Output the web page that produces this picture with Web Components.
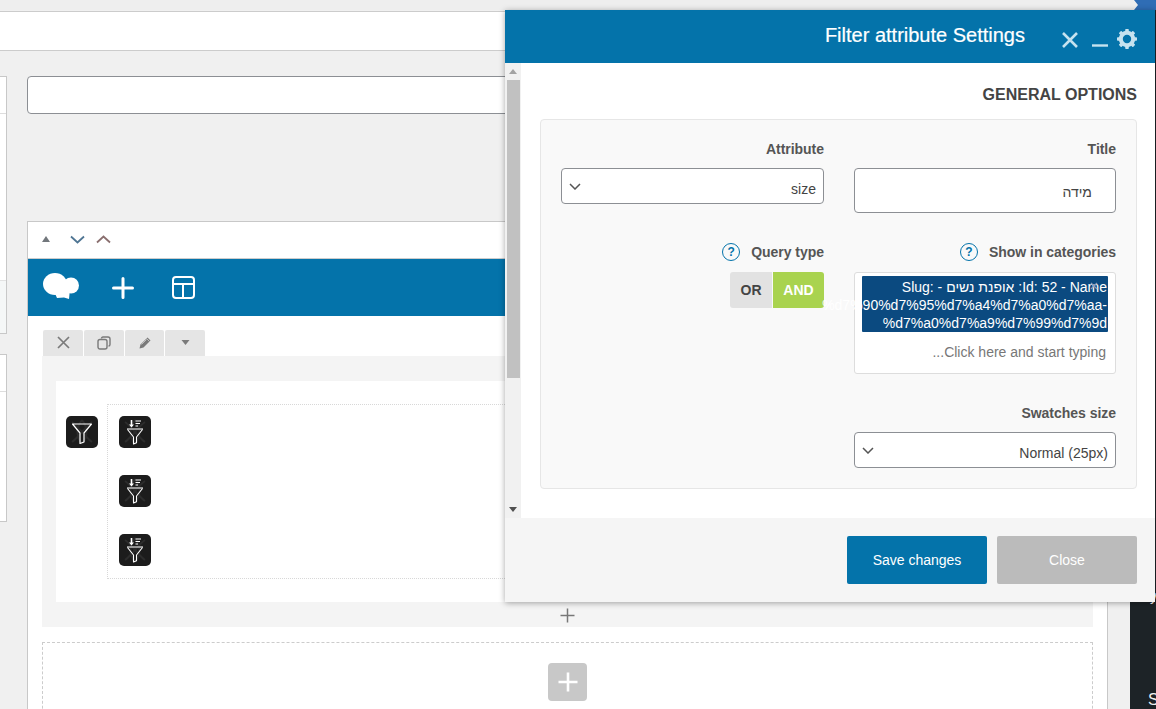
<!DOCTYPE html>
<html lang="en">
<head>
<meta charset="utf-8">
<title>Filter attribute Settings</title>
<style>
html,body{margin:0;padding:0;height:709px;overflow:hidden;background:#f0f0f0;font-family:"Liberation Sans",Arial,sans-serif;}
</style>
</head>
<body>
<x-page></x-page>
<script>
const def=(name,html)=>{customElements.define(name,class extends HTMLElement{constructor(){super();this.attachShadow({mode:'open'}).innerHTML=html;}});};

const funnelBg=`<path d="M6 6C12 10 20 22 26 26M26 6C20 10 12 22 6 26M16 4C10 12 10 20 16 28M16 4C22 12 22 20 16 28" fill="none" stroke="#2c2c2c" stroke-width="2"/>`;

def('x-funnel',`<style>:host{display:block;width:32px;height:32px;border-radius:5px;background:#1c1c1c;overflow:hidden}svg{display:block}</style>
<svg width="32" height="32" viewBox="0 0 32 32">${funnelBg}
<path d="M6.5 8H25.5L18 17V26L14 27.5V17Z" fill="none" stroke="#fff" stroke-width="1.2" stroke-linejoin="round"/></svg>`);

def('x-funnel-sort',`<style>:host{display:block;width:32px;height:32px;border-radius:5px;background:#1c1c1c;overflow:hidden}svg{display:block}</style>
<svg width="32" height="32" viewBox="0 0 32 32">${funnelBg}
<path d="M12.5 4V10" stroke="#fff" stroke-width="1.6"/><path d="M10 8.5H15L12.5 11.5Z" fill="#fff"/>
<path d="M16.5 5H22M16.5 7.5H21M16.5 10H19" stroke="#fff" stroke-width="1.2"/>
<path d="M8 13H24" stroke="#bbb" stroke-width="1.4"/>
<path d="M8.5 13.5L14.5 21V28L17.5 26.8V21L23.5 13.5" fill="none" stroke="#fff" stroke-width="1.1" stroke-linejoin="round"/></svg>`);

def('x-sidebar',`<style>
:host{display:flex;flex-direction:column;gap:20px;width:7px;flex:none}
.box{box-sizing:border-box;background:#fff;border:1px solid #c8c8c8;border-left:0;display:flex;flex-direction:column}
.a{height:258px}.b{height:168px}
.hd{height:36px;border-bottom:1px solid #ddd;flex:none}
.sp{flex:1}
.ft{height:52px;background:#f5f7f7;border-top:1px solid #e2e2e2;flex:none}
</style>
<div class="box a"><div class="hd"></div><div class="sp"></div><div class="ft"></div></div>
<div class="box b"><div class="hd"></div></div>`);

def('x-card-head',`<style>
:host{display:flex;align-items:center;height:36px;background:#fff;border-bottom:1px solid #ccc;padding-left:14px}
svg{display:block;flex:none;margin-top:-2px}
</style>
<svg style="margin-left:-1px" width="10" height="6" viewBox="0 0 10 6"><path d="M5 0L9 6H1Z" fill="#72777c"/></svg>
<svg style="margin-left:19px" width="15" height="9" viewBox="0 0 15 9"><path d="M1 1.500L7.500 7.500L14 1.500" fill="none" stroke="#4f7593" stroke-width="1.800"/></svg>
<svg style="margin-left:11px" width="15" height="9" viewBox="0 0 15 9"><path d="M1 7.500L7.500 1.500L14 7.500" fill="none" stroke="#8a6f6f" stroke-width="1.800"/></svg>`);

def('x-toolbar',`<style>
:host{display:flex;align-items:center;height:57px;background:#0473aa;padding-left:15px}
svg{display:block;flex:none}
</style>
<svg width="36" height="26" viewBox="0 0 36 26" style="margin-top:-4px"><ellipse cx="12" cy="11" rx="12" ry="11" fill="#fff"/><circle cx="28" cy="12.500" r="8" fill="#fff"/><path d="M10 16H27L26 26L21 24.500L14 25Z" fill="#fff"/></svg>
<svg style="margin-left:33px" width="22" height="22" viewBox="0 0 22 22"><path d="M11 1.500V20.500M1.500 11H20.500" stroke="#fff" stroke-width="3" stroke-linecap="round"/></svg>
<svg style="margin-left:38px" width="23" height="23" viewBox="0 0 23 23"><rect x="1" y="1" width="21" height="21" rx="3" fill="none" stroke="#fff" stroke-width="2"/><path d="M1 8H22M11 8V22" stroke="#fff" stroke-width="2"/></svg>`);

def('x-tabs',`<style>
:host{display:flex;gap:1px;height:26px;margin-left:1px}
div{width:40px;height:26px;background:#e5e5e5;border-radius:2px 2px 0 0;display:flex;align-items:center;justify-content:center}
svg{display:block;margin-top:-1px}
</style>
<div><svg width="13" height="13" viewBox="0 0 13 13"><path d="M1 1L12 12M12 1L1 12" stroke="#7a7a7a" stroke-width="1.700"/></svg></div>
<div><svg width="14" height="14" viewBox="0 0 14 14"><rect x="1" y="3.500" width="9" height="9.500" rx="2" fill="none" stroke="#7a7a7a" stroke-width="1.400"/><path d="M4.500 2.500Q4.500 1 6 1H11Q13 1 13 3V8.500Q13 10 11.500 10" fill="none" stroke="#7a7a7a" stroke-width="1.400"/></svg></div>
<div style="width:39px"><svg width="14" height="14" viewBox="0 0 14 14"><path d="M1.500 12.500L2.500 8.500L9.500 1.500L12.500 4.500L5.500 11.500Z" fill="#7a7a7a"/><path d="M8.500 2.500L11.500 5.500M3.500 8.500L8.500 3.500" stroke="#cfcfcf" stroke-width=".8"/></svg></div>
<div><svg width="9" height="5" viewBox="0 0 9 5"><path d="M0.500 0H8.500L4.500 5Z" fill="#7a7a7a"/></svg></div>`);

def('x-row',`<style>
:host{display:block;background:#f4f4f4;padding:25px 14px 0}
.inner{background:#fff;height:221px;box-sizing:border-box;padding:23px 14px 0 10px;display:flex;gap:9px}
.dots{flex:1;box-sizing:border-box;height:175px;border:1px dotted #d8d8d8;padding:11px 11px;display:flex;flex-direction:column;gap:27px}
.first{margin-top:12px}
.add{height:25px;box-sizing:border-box;padding-top:1px;display:flex;align-items:center;justify-content:center}
svg{display:block}
</style>
<div class="inner"><x-funnel class="first"></x-funnel>
<div class="dots"><x-funnel-sort></x-funnel-sort><x-funnel-sort></x-funnel-sort><x-funnel-sort></x-funnel-sort></div></div>
<div class="add"><svg width="15" height="15" viewBox="0 0 15 15"><path d="M7.500 0.500V14.500M0.500 7.500H14.500" stroke="#777" stroke-width="1.500"/></svg></div>`);

def('x-dropzone',`<style>
:host{display:flex;justify-content:center;border:1px dashed #ccc;border-bottom:0;height:80px;padding-top:20px;margin-top:15px}
div{width:39px;height:38px;border-radius:4px;background:#c8c8c8;display:flex;align-items:center;justify-content:center}
svg{display:block}
</style><div><svg width="20" height="20" viewBox="0 0 20 20"><path d="M10 0.500V19.500M0.500 10H19.500" stroke="#fff" stroke-width="2.600"/></svg></div>`);

def('x-card',`<style>
:host{display:block;background:#fff;border:1px solid #c8c8c8;border-bottom:0}
.content{padding:14px 14px 0}
</style>
<x-card-head></x-card-head><x-toolbar></x-toolbar>
<div class="content"><x-tabs></x-tabs><x-row></x-row><x-dropzone></x-dropzone></div>`);

def('x-main',`<style>
:host{display:block;width:1081px;flex:none}
.input{box-sizing:border-box;height:38px;background:#fff;border:1px solid #8c8f94;border-radius:4px;margin-bottom:107px}
</style><div class="input"></div><x-card></x-card>`);

def('x-help',`<style>
:host{display:inline-flex;box-sizing:border-box;width:18px;height:18px;border:1.500px solid #0473aa;border-radius:50%;align-items:center;justify-content:center;color:#0473aa;font:bold 12px "Liberation Sans",sans-serif;letter-spacing:0;direction:ltr}
</style>?`);

def('x-label',`<style>
:host{display:flex;align-items:center;gap:11px;height:18px;font:bold 14px/20px "Liberation Sans",sans-serif;color:#555;letter-spacing:-.03px}
</style><slot></slot>`);

def('x-select',`<style>
:host{display:flex;box-sizing:border-box;direction:ltr;align-items:center;justify-content:space-between;height:36px;background:#fff;border:1px solid #8c8f94;border-radius:4px;padding:0 7px 0 7px;font:14px "Liberation Sans",sans-serif;color:#444}
span{padding-top:5px}
svg{display:block}
</style><svg width="12" height="7" viewBox="0 0 12 7"><path d="M1 1L6 6L11 1" fill="none" stroke="#555" stroke-width="1.500"/></svg><span><slot></slot></span>`);

def('x-text-input',`<style>
:host{display:flex;box-sizing:border-box;align-items:center;height:45px;background:#fff;border:1px solid #8c8f94;border-radius:4px;padding:2px 23px 0;direction:rtl;font:14px "Liberation Sans","Noto Sans",sans-serif;color:#444}
</style><slot></slot>`);

def('x-toggle',`<style>
:host{display:flex;direction:ltr;width:94px;height:36px;font:bold 14px "Liberation Sans",sans-serif;border-radius:3px;overflow:hidden;gap:1px}
div{display:flex;align-items:center;justify-content:center}
.or{width:42px;background:#e2e2e2;color:#444}
.and{flex:1;background:#a9d34f;color:#fff}
</style><div class="or">OR</div><div class="and">AND</div>`);

def('x-multi',`<style>
:host{display:block;box-sizing:border-box;height:102px;background:#fff;border:1px solid #ddd;border-radius:3px;padding:3px 7px 0;font:14px/18px "Liberation Sans","Noto Sans",sans-serif;color:#fff}
.tag{position:relative;height:56px;box-sizing:border-box;padding:2px 1px 0;background:#0b4a80;border-radius:1px}
.l{display:flex;justify-content:flex-end;white-space:nowrap;direction:ltr}
.l1{direction:rtl;justify-content:flex-start}
.x{position:absolute;right:10px;top:6px;display:block}
.ph{direction:rtl;color:#777;padding:11px 2px 0 0}
</style>
<div class="tag"><div class="l l1">Id: 52 - Name: אופנת נשים - Slug:&lrm;</div>
<div class="l">%d7%90%d7%95%d7%a4%d7%a0%d7%aa-</div>
<div class="l">%d7%a0%d7%a9%d7%99%d7%9d</div><svg class="x" width="8" height="8" viewBox="0 0 8 8"><path d="M1 1L7 7M7 1L1 7" stroke="#8f9dba" stroke-width="1.300"/></svg></div>
<div class="ph">Click here and start typing...</div>`);

def('x-field',`<style>
:host{display:flex;flex-direction:column;gap:var(--g,10px);align-items:stretch}
</style><slot></slot>`);

def('x-panel',`<style>
:host{display:grid;direction:rtl;grid-template-columns:262px 263px;column-gap:30px;align-content:start;box-sizing:border-box;height:370px;background:#f9f9f9;border:1px solid #e6e6e6;border-radius:4px;padding:20px 20px 0;font:14px "Liberation Sans",sans-serif}
.r2{margin-top:30px}
.r3{margin-top:30px;grid-column:1}
</style>
<x-field><x-label>Title</x-label><x-text-input>מידה</x-text-input></x-field>
<x-field><x-label>Attribute</x-label><x-select>size</x-select></x-field>
<x-field class="r2" style="--g:11px"><x-label><span>Show in categories</span><x-help></x-help></x-label><x-multi></x-multi></x-field>
<x-field class="r2" style="--g:11px"><x-label><span>Query type</span><x-help></x-help></x-label><x-toggle></x-toggle></x-field>
<x-field class="r3"><x-label>Swatches size</x-label><x-select>Normal (25px)</x-select></x-field>`);

def('x-scrollbar',`<style>
:host{display:flex;flex-direction:column;width:16px;flex:none;background:#f1f1f1}
.a{height:17px;display:flex;align-items:center;justify-content:center;flex:none}
.t{height:298px;margin:0 1px 0 2px;background:#c1c1c1;flex:none}
.sp{flex:1}
svg{display:block}
</style>
<div class="a"><svg width="8" height="5" viewBox="0 0 8 5"><path d="M4 0L8 5H0Z" fill="#a3a3a3"/></svg></div>
<div class="t"></div><div class="sp"></div>
<div class="a"><svg width="8" height="5" viewBox="0 0 8 5"><path d="M0 0H8L4 5Z" fill="#505050"/></svg></div>`);

let teeth='';for(let i=0;i<8;i++){teeth+=`<rect x="8.200" y="0" width="3.600" height="5" rx=".8" fill="#c6e2ef" transform="rotate(${i*45} 10 10)"/>`;}

def('x-modal-head',`<style>
:host{display:flex;align-items:flex-start;height:53px;flex:none;background:#0473aa;color:#fff;box-sizing:border-box;padding:14px 18px 0 0;justify-content:flex-end}
h1{margin:0;font:20px/22px "Liberation Sans",sans-serif;-webkit-text-stroke:.2px #fff}
svg{display:block;flex:none}
</style>
<h1>Filter attribute Settings</h1>
<svg style="margin:8px 0 0 37px" width="16" height="16" viewBox="0 0 16 16"><path d="M1 1L15 15M15 1L1 15" stroke="#c6e2ef" stroke-width="2.600"/></svg>
<svg style="margin:20px 0 0 14px" width="16" height="3" viewBox="0 0 16 3"><path d="M0 1.500H16" stroke="#c6e2ef" stroke-width="2.400"/></svg>
<svg style="margin:5px 0 0 9px" width="20" height="20" viewBox="0 0 20 20">${teeth}<circle cx="10" cy="10" r="6.200" fill="none" stroke="#c6e2ef" stroke-width="4"/></svg>`);

def('x-modal',`<style>
:host{position:absolute;left:505px;top:10px;width:650px;height:592px;display:flex;flex-direction:column;background:#fff;box-shadow:0 1px 6px rgba(0,0,0,.35);z-index:5}
.body{flex:1;display:flex;min-height:0}
.content{flex:1;padding:22px 18px 0 19px}
h2{margin:0 0 14px;height:20px;font:bold 16px/20px "Liberation Sans",sans-serif;color:#444;text-align:right}
.foot{height:84px;flex:none;background:#f5f5f5;box-sizing:border-box;padding:18px 18px 0 0;display:flex;justify-content:flex-end;gap:10px}
.btn{width:140px;height:48px;display:flex;align-items:center;justify-content:center;color:#fff;font:14px "Liberation Sans",sans-serif;border-radius:2px}
.save{background:#0473aa}.close{background:#bbb}
</style>
<x-modal-head></x-modal-head>
<div class="body"><x-scrollbar></x-scrollbar><div class="content"><h2>GENERAL OPTIONS</h2><x-panel></x-panel></div></div>
<div class="foot"><div class="btn save">Save changes</div><div class="btn close">Close</div></div>`);

def('x-admin-side',`<style>
:host{display:block;width:26px;flex:none;background:#1d2327;color:#f0f0f0;font:14px/18px "Liberation Sans",sans-serif;padding:577px 0 0 18px;box-sizing:border-box;overflow:hidden;white-space:nowrap}
.y{margin-left:2px}
.s{margin-top:86px;font-size:16px}
</style><div class="y">y</div><div class="s">S</div>`);

def('x-page',`<style>
:host{display:block;position:relative;width:1156px;height:709px;overflow:hidden}
.strip{height:10px;display:flex;background:#eee;justify-content:flex-end}
.strip div{width:22px;height:10px;background:#2f6db5;clip-path:polygon(0 0,100% 0,100% 100%,0 100%,4px 50%)}
.wrap{display:flex;height:699px}
.left{flex:1;min-width:0;overflow:hidden}
.bar{box-sizing:border-box;height:40px;margin:1px 0 25px;background:#fff;border-top:1px solid #ccc;border-bottom:1px solid #ccc}
.cols{display:flex;gap:20px}
</style>
<div class="strip"><div></div></div>
<div class="wrap"><div class="left"><div class="bar"></div><div class="cols"><x-sidebar></x-sidebar><x-main></x-main></div></div><x-admin-side></x-admin-side></div>
<x-modal></x-modal>`);
</script>
</body>
</html>
